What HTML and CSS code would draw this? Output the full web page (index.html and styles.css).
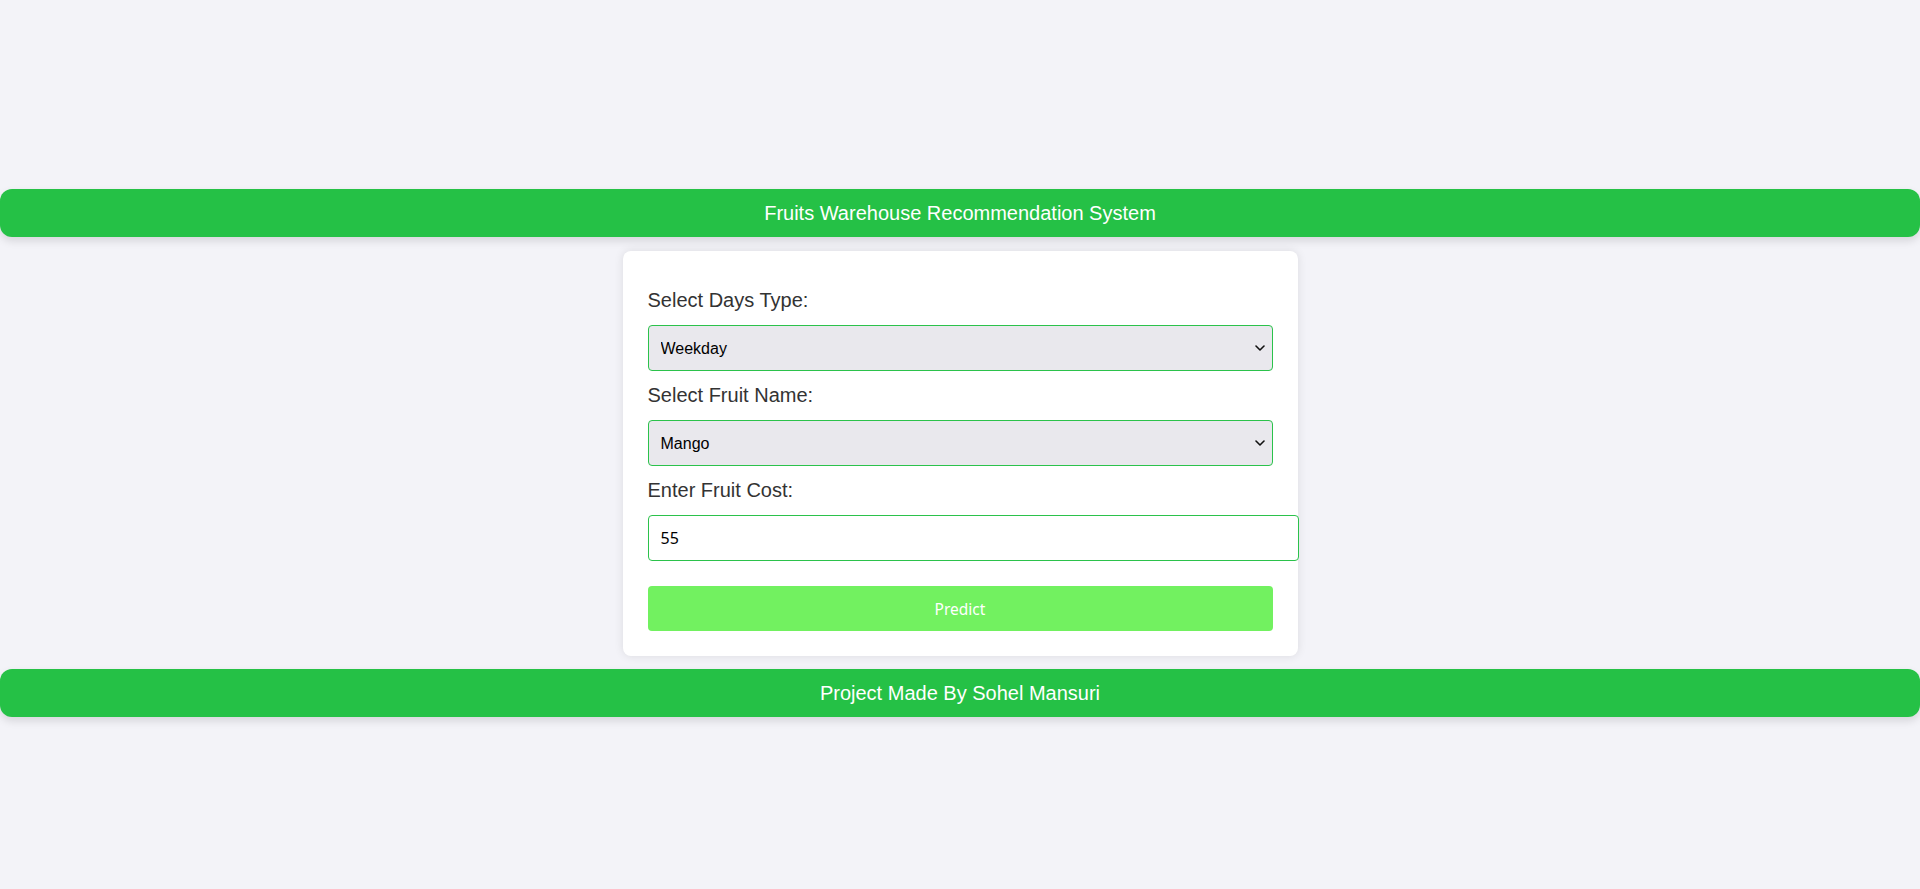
FILE: index.html
```html
<!DOCTYPE html>
<html lang="en">
<head>
<meta charset="utf-8">
<title>Fruits Warehouse Recommendation System</title>
<link rel="stylesheet" href="styles.css">
</head>
<body>
  <header class="bar">Fruits Warehouse Recommendation System</header>
  <main class="card">
    <form class="form">
      <label class="label" for="days">Select Days Type:</label>
      <div class="select-wrap">
        <select class="field select" id="days">
          <option>Weekday</option>
          <option>Weekend</option>
        </select>
        <svg class="chevron" width="10" height="6" viewBox="0 0 10 6" aria-hidden="true"><path d="M1 1 L5 5 L9 1" fill="none" stroke="#111" stroke-width="1.6" stroke-linecap="round" stroke-linejoin="round"/></svg>
      </div>
      <label class="label" for="fruit">Select Fruit Name:</label>
      <div class="select-wrap">
        <select class="field select" id="fruit">
          <option>Mango</option>
          <option>Apple</option>
        </select>
        <svg class="chevron" width="10" height="6" viewBox="0 0 10 6" aria-hidden="true"><path d="M1 1 L5 5 L9 1" fill="none" stroke="#111" stroke-width="1.6" stroke-linecap="round" stroke-linejoin="round"/></svg>
      </div>
      <label class="label" for="cost">Enter Fruit Cost:</label>
      <input class="field input" id="cost" type="text" value="55">
      <button class="btn" type="button">Predict</button>
    </form>
  </main>
  <footer class="bar">Project Made By Sohel Mansuri</footer>
</body>
</html>
```

FILE: styles.css
```css
html, body {
  margin: 0;
  padding: 0;
}
body {
  background: #f3f3f8;
  font-family: "Liberation Sans", Arial, sans-serif;
  padding-top: 189px;
  height: 889px;
  box-sizing: border-box;
}
.bar {
  background: #25c146;
  color: #ffffff;
  font-size: 20px;
  height: 48px;
  line-height: 48px;
  text-align: center;
  border-radius: 12px;
  box-shadow: 0 4px 8px rgba(0, 0, 0, 0.12);
}
.card {
  width: 625px;
  margin: 14px auto 13px;
  padding: 25px 25px 25px;
  background: #ffffff;
  border-radius: 8px;
  box-shadow: 0 0 10px rgba(0, 0, 0, 0.1);
}
.form {
  display: flex;
  flex-direction: column;
  align-items: flex-start;
}
.label {
  display: block;
  font-size: 20px;
  line-height: 23px;
  color: #333333;
  margin: 13px 0 13px;
}
.field {
  border: 1px solid #2bc24b;
  border-radius: 4px;
  font-family: "Liberation Sans", Arial, sans-serif;
  font-size: 16px;
  color: #000000;
  margin: 0;
  outline: none;
}
.select-wrap {
  position: relative;
  width: 100%;
}
.select {
  display: block;
  box-sizing: border-box;
  width: 100%;
  height: 46px;
  padding: 0 30px 0 12px;
  background-color: #e9e8ed;
  -webkit-appearance: none;
  appearance: none;
}
.chevron {
  position: absolute;
  right: 8px;
  top: 20px;
  pointer-events: none;
}
.input {
  box-sizing: content-box;
  width: 100%;
  height: 44px;
  padding: 0 12px;
  background: #ffffff;
  font-family: "Noto Sans", "Open Sans", sans-serif;
  font-size: 16px;
}
.btn {
  width: 100%;
  height: 45px;
  margin-top: 25px;
  border: none;
  border-radius: 4px;
  background: #72f160;
  color: #ffffff;
  font-family: "Noto Sans", "Open Sans", sans-serif;
  font-size: 15.5px;
  cursor: pointer;
}
```
